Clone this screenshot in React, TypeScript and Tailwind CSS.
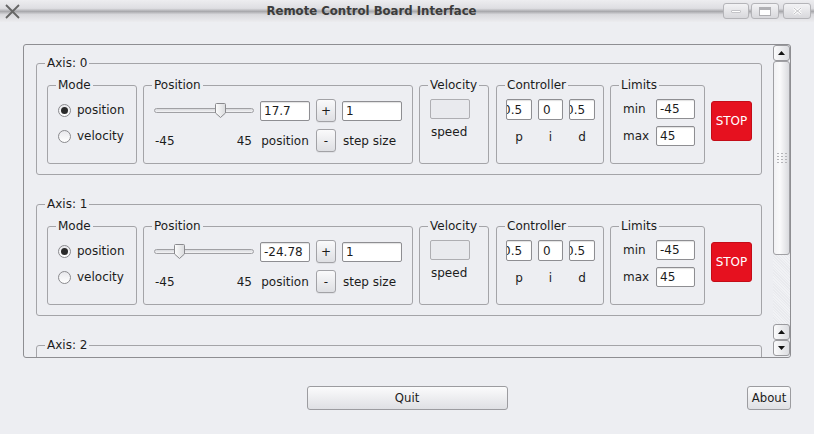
import type { ReactNode } from 'react';

const axes = [
  { id: 0, value: '17.7', pos: 17.7 },
  { id: 1, value: '-24.78', pos: -24.78 },
  { id: 2, value: '0', pos: 0 },
];

function GroupBox({ title, className = '', children }: { title: string; className?: string; children: ReactNode }) {
  return (
    <fieldset className={`min-w-0 shrink-0 rounded-[3px] border border-[#a4a4a8] ${className}`}>
      <legend className="ml-[8px] px-[2px] leading-[14px]">{title}</legend>
      {children}
    </fieldset>
  );
}

function TextBox({ value, className = '' }: { value: string; className?: string }) {
  return (
    <div
      className={`flex items-center overflow-hidden whitespace-nowrap rounded-[2px] border border-[#8e8e92] bg-white pl-[3px] shadow-[inset_0_1px_1px_rgba(0,0,0,0.12)] ${className}`}
    >
      {value}
    </div>
  );
}

function SmallButton({ label }: { label: string }) {
  return (
    <div className="flex h-[23px] w-[20px] items-center justify-center rounded-[3px] border border-[#a2a2a6] bg-[linear-gradient(to_bottom,#fafafb,#dedfe3)] shadow-[0_1px_0_rgba(0,0,0,0.05)]">
      {label}
    </div>
  );
}

function Radio({ checked, label }: { checked?: boolean; label: string }) {
  return (
    <div className="flex h-[22px] items-center gap-[6px]">
      <div className="flex h-[13px] w-[13px] items-center justify-center rounded-full border border-[#8a8a8e] bg-[linear-gradient(to_bottom,#e8e8ec,#ffffff)]">
        {checked && <div className="h-[7px] w-[7px] rounded-full bg-[#2a2a2a]" />}
      </div>
      <span>{label}</span>
    </div>
  );
}

function Slider({ pos }: { pos: number }) {
  const frac = (pos + 45) / 90;
  return (
    <div className="relative flex h-[15px] w-[100px] items-center">
      <div className="h-[5px] w-full rounded-full border border-[#a0a0a4] bg-[linear-gradient(to_bottom,#d8d9dd,#f4f4f6)]" />
      <svg
        className="absolute top-0"
        style={{ left: `${Math.round(frac * 88)}px` }}
        width="11"
        height="15"
        viewBox="0 0 11 15"
      >
        <defs>
          <linearGradient id="hg" x1="0" y1="0" x2="1" y2="0">
            <stop offset="0" stopColor="#fdfdfd" />
            <stop offset="1" stopColor="#d9dadd" />
          </linearGradient>
        </defs>
        <path d="M1.5 0.5 H9.5 a1 1 0 0 1 1 1 V10 L5.5 14.5 L0.5 10 V1.5 a1 1 0 0 1 1 -1 Z" fill="url(#hg)" stroke="#8a8a8e" />
      </svg>
    </div>
  );
}

function AxisGroup({ id, value, pos }: { id: number; value: string; pos: number }) {
  return (
    <GroupBox title={`Axis: ${id}`} className="h-[119px] w-[726px]">
      <div className="flex items-center pl-[10px] pt-[8px]">
        <GroupBox title="Mode" className="h-[86px] w-[90px]">
          <div className="flex flex-col gap-[4px] pl-[10px] pt-[7px]">
            <Radio checked label="position" />
            <Radio label="velocity" />
          </div>
        </GroupBox>

        <GroupBox title="Position" className="ml-[6px] h-[86px] w-[270px]">
          <div className="flex flex-col gap-[7px] pl-[10px] pt-[7px]">
            <div className="flex h-[23px] items-center gap-[6px]">
              <Slider pos={pos} />
              <TextBox value={value} className="h-[20px] w-[50px]" />
              <SmallButton label="+" />
              <TextBox value="1" className="h-[20px] w-[60px]" />
            </div>
            <div className="flex h-[23px] items-center gap-[6px]">
              <div className="flex w-[100px] justify-between pl-[1px] pr-[2px]">
                <span>-45</span>
                <span>45</span>
              </div>
              <span className="w-[50px] text-center">position</span>
              <SmallButton label="-" />
              <span className="pl-[1px]">step size</span>
            </div>
          </div>
        </GroupBox>

        <GroupBox title="Velocity" className="ml-[6px] h-[86px] w-[70px]">
          <div className="flex flex-col pl-[10px] pt-[7px]">
            <div className="h-[20px] w-[40px] rounded-[2px] border border-[#aeaeb2] bg-[#e9eaee]" />
            <span className="mt-[6px] pl-[1px] leading-[14px]">speed</span>
          </div>
        </GroupBox>

        <GroupBox title="Controller" className="ml-[7px] h-[86px] w-[108px]">
          <div className="flex gap-[6px] pl-[9px] pt-[7px]">
            {[
              { v: '0.5', l: 'p', w: 'w-[26px]', shift: true },
              { v: '0', l: 'i', w: 'w-[25px]', shift: false },
              { v: '0.5', l: 'd', w: 'w-[26px]', shift: true },
            ].map((c) => (
              <div key={c.l} className="flex flex-col items-center">
                <div
                  className={`flex h-[21px] items-center overflow-hidden whitespace-nowrap rounded-[2px] border border-[#8e8e92] bg-white shadow-[inset_0_1px_1px_rgba(0,0,0,0.12)] ${c.w}`}
                >
                  <span className={c.shift ? '-ml-[4px]' : 'ml-[4px]'}>{c.v}</span>
                </div>
                <span className="mt-[10px] leading-[14px]">{c.l}</span>
              </div>
            ))}
          </div>
        </GroupBox>

        <GroupBox title="Limits" className="ml-[6px] h-[86px] w-[95px]">
          <div className="flex flex-col gap-[7px] pl-[12px] pt-[7px]">
            <div className="flex h-[20px] items-center">
              <span className="w-[33px]">min</span>
              <TextBox value="-45" className="h-[20px] w-[39px]" />
            </div>
            <div className="flex h-[20px] items-center">
              <span className="w-[33px]">max</span>
              <TextBox value="45" className="h-[20px] w-[39px]" />
            </div>
          </div>
        </GroupBox>

        <div className="ml-[6px] flex h-[40px] w-[41px] items-center justify-center rounded-[3px] border border-[#c40c18] bg-[#e6111f] text-white">
          STOP
        </div>
      </div>
    </GroupBox>
  );
}

function ArrowButton({ up }: { up?: boolean }) {
  return (
    <div className="flex h-[16px] w-full items-center justify-center rounded-[3px] border border-[#9a9a9e] bg-[linear-gradient(to_right,#fbfbfc,#dcdde1)]">
      <svg width="7" height="4" viewBox="0 0 7 4">
        <path d={up ? 'M0 4 L3.5 0 L7 4 Z' : 'M0 0 L3.5 4 L7 0 Z'} fill="#111" />
      </svg>
    </div>
  );
}

function ScrollBar() {
  return (
    <div className="flex w-[17px] shrink-0 flex-col">
      <ArrowButton up />
      <div className="flex h-[194px] items-center justify-center rounded-[3px] border border-[#a0a0a4] bg-[linear-gradient(to_right,#f2f2f4,#fafafb_40%,#dadbdf)]">
        <div className="grid grid-cols-3 gap-x-[2px] gap-y-[2px]">
          {Array.from({ length: 12 }).map((_, i) => (
            <div key={i} className="h-[1px] w-[2px] bg-[#b4b4b8]" />
          ))}
        </div>
      </div>
      <div className="flex-1 bg-[repeating-linear-gradient(45deg,#e9eaee_0px,#e9eaee_1px,#f1f2f5_1px,#f1f2f5_2px)]" />
      <ArrowButton up />
      <ArrowButton />
      <div className="h-[1px]" />
    </div>
  );
}

function WinButton({ children, w }: { children: ReactNode; w: string }) {
  return (
    <div
      className={`flex h-[16px] items-center justify-center rounded-[3px] border border-[#b4b4b8] bg-[linear-gradient(to_bottom,#f3f3f5,#d8d8dc)] ${w}`}
    >
      {children}
    </div>
  );
}

export default function App() {
  return (
    <div
      className="flex h-[434px] w-[814px] flex-col overflow-hidden bg-[#edeef2] text-[12px] text-[#1c1c1c]"
      style={{ fontFamily: '"DejaVu Sans", "Liberation Sans", sans-serif' }}
    >
      {/* title bar */}
      <div className="flex h-[22px] shrink-0 items-center bg-[linear-gradient(to_bottom,#ededf0_0%,#dedee2_38%,#a8a8ac_52%,#d8d8dc_66%,#ececef_100%)]">
        <svg className="ml-[5px] shrink-0" width="15" height="15" viewBox="0 0 15 15">
          <path d="M1 1 L14 14 M14 1 L1 14" stroke="#666" strokeWidth="1.8" />
        </svg>
        <div
          className="flex-1 text-center text-[13px] font-bold text-[#3c3c3c]"
          style={{ fontFamily: '"DejaVu Sans Condensed", "DejaVu Sans", sans-serif' }}
        >
          Remote Control Board Interface
        </div>
        <div className="flex shrink-0 items-center pr-[3px]">
          <WinButton w="w-[26px]">
            <div className="h-[3px] w-[10px] rounded-[1px] border border-[#c4c4c8] bg-white" />
          </WinButton>
          <div className="ml-[2px]">
            <WinButton w="w-[28px]">
              <div className="h-[9px] w-[12px] border border-[#b0b0b4] border-t-[3px] bg-white" />
            </WinButton>
          </div>
          <div className="ml-[4px]">
            <WinButton w="w-[28px]">
              <svg width="9" height="8" viewBox="0 0 9 8">
                <path d="M1 1 L8 7 M8 1 L1 7" stroke="#fff" strokeWidth="2.6" />
                <path d="M1 1 L8 7 M8 1 L1 7" stroke="#c0c0c4" strokeWidth="1" />
              </svg>
            </WinButton>
          </div>
        </div>
      </div>

      {/* body */}
      <div className="flex flex-col px-[23px] pt-[22px]">
        <div className="flex h-[314px] w-[768px] rounded-[3px] border border-[#8e8e92]">
          <div className="flex flex-1 flex-col gap-[22px] overflow-hidden pl-[12px] pt-[11px]">
            {axes.map((a) => (
              <AxisGroup key={a.id} id={a.id} value={a.value} pos={a.pos} />
            ))}
          </div>
          <ScrollBar />
        </div>

        <div
          className="mt-[28px] grid w-[768px] grid-cols-[1fr_auto_1fr] text-[13px]"
          style={{ fontFamily: '"DejaVu Sans Condensed", "DejaVu Sans", sans-serif' }}
        >
          <div />
          <div className="flex h-[24px] w-[201px] items-center justify-center rounded-[3px] border border-[#9c9ca0] bg-[linear-gradient(to_bottom,#fbfbfc,#dfe0e4)]">
            Quit
          </div>
          <div className="flex justify-end">
            <div className="flex h-[24px] w-[44px] items-center justify-center rounded-[3px] border border-[#9c9ca0] bg-[linear-gradient(to_bottom,#fbfbfc,#dfe0e4)]">
              About
            </div>
          </div>
        </div>
      </div>
    </div>
  );
}
